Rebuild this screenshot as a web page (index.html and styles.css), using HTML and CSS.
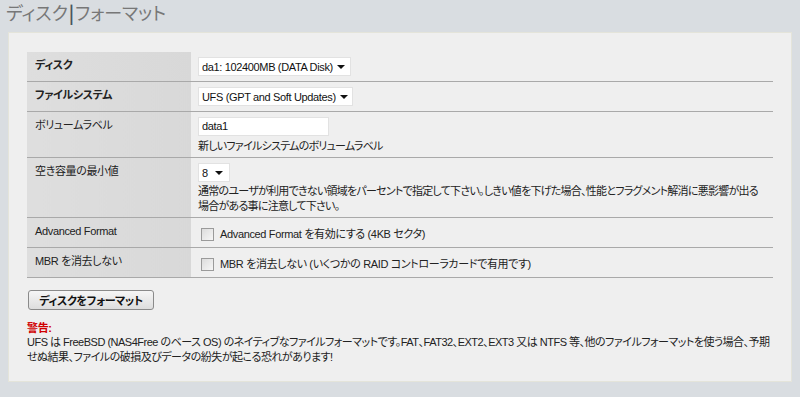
FILE: index.html
```html
<!DOCTYPE html>
<html>

<head>
    <title>ディスク|フォーマット</title>
    <link rel="stylesheet" href="styles.css">
</head>

<body>
    <h1 class="page-title">ディスク<span class="sep">|</span>フォーマット</h1>

    <div class="panel">
        <table class="form-table">
            <tr class="row-main">
                <td class="label bold">ディスク</td>
                <td class="value">
                    <div class="select select-disk"><span>da1: 102400MB (DATA Disk)</span><i class="caret"></i></div>
                </td>
            </tr>
            <tr class="row-main">
                <td class="label bold">ファイルシステム</td>
                <td class="value">
                    <div class="select select-fs"><span>UFS (GPT and Soft Updates)</span><i class="caret"></i></div>
                </td>
            </tr>
            <tr>
                <td class="label">ボリュームラベル</td>
                <td class="value">
                    <div class="text-input">data1</div>
                    <div class="hint">新しいファイルシステムのボリュームラベル</div>
                </td>
            </tr>
            <tr>
                <td class="label">空き容量の最小値</td>
                <td class="value">
                    <div class="select select-min"><span>8</span><i class="caret"></i></div>
                    <div class="hint multi">通常のユーザが利用できない領域をパーセントで指定して下さい。しきい値を下げた場合、性能とフラグメント解消に悪影響が出る場合がある事に注意して下さい。</div>
                </td>
            </tr>
            <tr>
                <td class="label">Advanced Format</td>
                <td class="value">
                    <label class="check"><span class="box"></span>Advanced Format を有効にする (4KB セクタ)</label>
                </td>
            </tr>
            <tr>
                <td class="label">MBR を消去しない</td>
                <td class="value">
                    <label class="check"><span class="box"></span>MBR を消去しない (いくつかの RAID コントローラカードで有用です)</label>
                </td>
            </tr>
        </table>

        <button class="format-btn">ディスクをフォーマット</button>

        <div class="warning">
            <div class="warning-title">警告:</div>
            <p>UFS は FreeBSD (NAS4Free のベース OS) のネイティブなファイルフォーマットです。FAT、FAT32、EXT2、EXT3 又は NTFS 等、他のファイルフォーマットを使う場合、予期せぬ結果、ファイルの破損及びデータの紛失が起こる恐れがあります!</p>
        </div>
    </div>
</body>

</html>
```

FILE: styles.css
```css
body {
    margin: 0;
    background-color: #d9dde1;
    font-family: "Liberation Sans", "Noto Sans CJK JP", sans-serif;
    font-size: 11px;
    letter-spacing: -0.35px;
    color: #222;
    font-feature-settings: "palt";
}

.page-title {
    margin: 0;
    padding: 1px 0 0 6px;
    height: 31px;
    font-size: 18px;
    font-weight: normal;
    line-height: 22px;
    letter-spacing: 0;
    color: #777;
    font-family: "Noto Sans CJK JP", sans-serif;
}

.page-title .sep {
    color: #4a5560;
    font-weight: bold;
    margin: 0 1px;
}

.panel {
    margin: 0 8px;
    padding: 19px 18px 16px;
    background-color: #efefef;
    border: 1px solid #e4e4da;
}

.form-table {
    width: 100%;
    border-collapse: collapse;
}

.form-table td {
    vertical-align: top;
    border-bottom: 1px solid #a9a9a9;
}

.form-table td.label {
    width: 148px;
    padding: 5px 8px 0;
    background: linear-gradient(to right, #dedede, #d8d8d8);
    line-height: 16px;
    color: #222;
}

.form-table td.label.bold {
    font-weight: bold;
}

.form-table td.value {
    padding: 5px 7px 3px;
    line-height: 16px;
}

.row-main td {
    height: 21px;
}

.select {
    display: inline-flex;
    align-items: center;
    height: 19px;
    padding: 0 0 0 3px;
    background: #fff;
    border: 1px solid #e2e2e2;
    box-sizing: border-box;
    color: #111;
}

.select-disk {
    width: 153px;
}

.select-fs {
    width: 155px;
}

.select-min {
    width: 32px;
}

.select span {
    flex: 1;
    white-space: nowrap;
}

.caret {
    width: 0;
    height: 0;
    margin: 1px 6px 0 4px;
    border-left: 4px solid transparent;
    border-right: 4px solid transparent;
    border-top: 4px solid #111;
}

.text-input {
    width: 131px;
    height: 19px;
    padding: 0 3px;
    box-sizing: border-box;
    background: #fff;
    border: 1px solid #e2e2e2;
    line-height: 17px;
    color: #111;
}

.hint {
    margin-top: 2px;
    line-height: 16px;
    letter-spacing: -0.75px;
}

.hint.multi {
    line-height: 15px;
}

.check {
    display: flex;
    align-items: center;
    padding: 3px 0 2px 3px;
}

.check .box {
    width: 11px;
    height: 11px;
    margin-right: 6px;
    border: 1px solid #9a9a9a;
    background: linear-gradient(to bottom right, #dcdcdc, #f6f6f6);
}

.format-btn {
    display: block;
    margin: 12px 0 0 1px;
    width: 126px;
    height: 20px;
    padding: 0;
    border: 1px solid #8a8a8a;
    border-radius: 3px;
    background: linear-gradient(to bottom, #f6f6f6, #dddddd);
    font-family: "Liberation Sans", "Noto Sans CJK JP", sans-serif;
    font-size: 11px;
    font-weight: bold;
    letter-spacing: -0.35px;
    color: #111;
    font-feature-settings: "palt";
}

.warning {
    margin-top: 11px;
}

.warning-title {
    color: #d00000;
    font-weight: bold;
    line-height: 14px;
}

.warning p {
    margin: 0;
    line-height: 15px;
    letter-spacing: -0.5px;
}
```
